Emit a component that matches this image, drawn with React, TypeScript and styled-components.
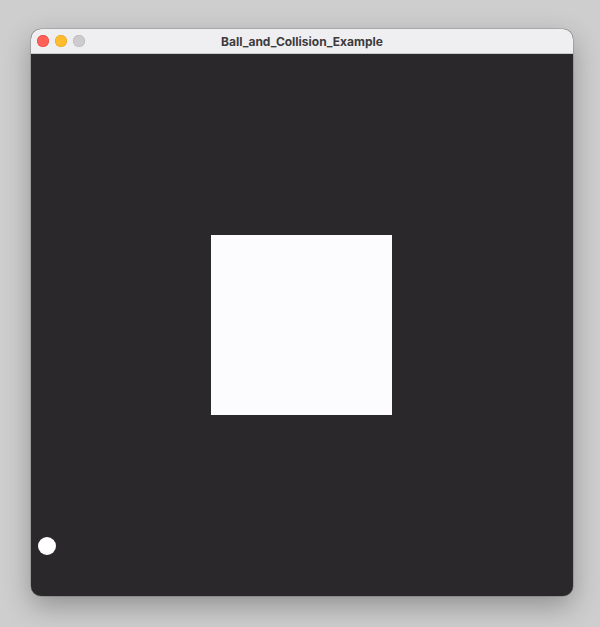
import styled, { createGlobalStyle } from "styled-components";

const GlobalStyle = createGlobalStyle`
    html, body {
        margin: 0;
        padding: 0;
        background: #cfcecf;
        font-family: "Inter", "Liberation Sans", Arial, sans-serif;
    }
`;

const Page = styled.div`
    width: 600px;
    height: 627px;
    padding: 29px 0 0 31px;
    box-sizing: border-box;
`;

const Window = styled.div`
    width: 542px;
    border-radius: 10px;
    overflow: hidden;
    background: #2a282b;
    box-shadow: 0 0 0 0.5px rgba(0, 0, 0, 0.25), 0 10px 28px rgba(0, 0, 0, 0.3);
`;

const TitleBar = styled.div`
    height: 25px;
    background: #efeef0;
    border-bottom: 1px solid #c9c8ca;
    box-sizing: border-box;
    display: flex;
    align-items: center;
    position: relative;
    padding-left: 6px;
`;

const Lights = styled.div`
    display: flex;
    gap: 6px;
`;

const Light = styled.span<{ $color: string; $border: string }>`
    width: 12px;
    height: 12px;
    border-radius: 50%;
    background: ${(p) => p.$color};
    box-shadow: inset 0 0 0 0.5px ${(p) => p.$border};
`;

const Title = styled.div`
    position: absolute;
    left: 0;
    right: 0;
    text-align: center;
    font-size: 12px;
    font-weight: 700;
    color: #3c3b3d;
    pointer-events: none;
`;

const Canvas = styled.div`
    position: relative;
    height: 542px;
    display: flex;
    align-items: center;
    justify-content: center;
`;

const Box = styled.div`
    width: 181px;
    height: 180px;
    background: #fcfbfe;
    margin: 0 1px 1px 0;
`;

const Ball = styled.div`
    position: absolute;
    left: 7px;
    top: 483px;
    width: 18px;
    height: 18px;
    border-radius: 50%;
    background: #ffffff;
`;

export default function App() {
    return (
        <>
            <GlobalStyle />
            <Page>
                <Window>
                    <TitleBar>
                        <Lights>
                            <Light $color="#fe5f57" $border="#e0443e" />
                            <Light $color="#febc2e" $border="#dea123" />
                            <Light $color="#cdcbcd" $border="#b5b3b5" />
                        </Lights>
                        <Title>Ball_and_Collision_Example</Title>
                    </TitleBar>
                    <Canvas>
                        <Box />
                        <Ball />
                    </Canvas>
                </Window>
            </Page>
        </>
    );
}
